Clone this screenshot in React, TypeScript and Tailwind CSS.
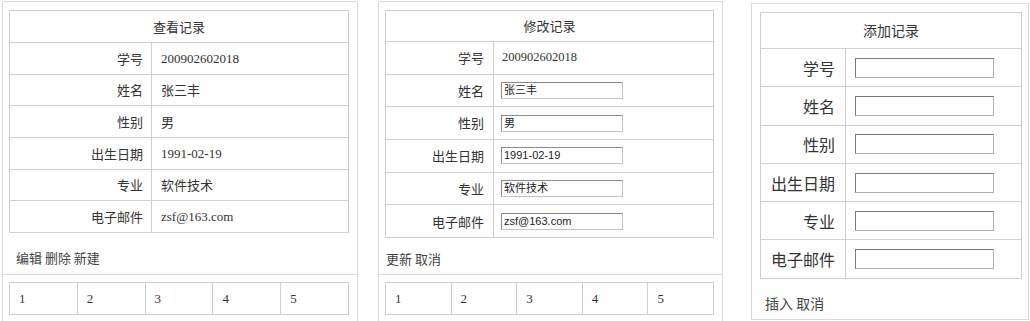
import React from "react";

const cjk = { fontFamily: '"Noto Sans CJK SC", "Liberation Sans", sans-serif' };
const serif = { fontFamily: '"Liberation Serif", "Noto Sans CJK SC", serif' };
const sans = { fontFamily: '"Liberation Sans", "Noto Sans CJK SC", sans-serif' };

const labels = ["学号", "姓名", "性别", "出生日期", "专业", "电子邮件"];

function Pager() {
  return (
    <table className="w-full table-fixed border border-[#cfcfcf] text-[13px] text-[#333]" style={serif}>
      <tbody>
        <tr className="h-[32px]">
          {["1", "2", "3", "4", "5"].map((n) => (
            <td key={n} className="border border-[#cfcfcf] pl-[9px] align-middle">
              {n}
            </td>
          ))}
        </tr>
      </tbody>
    </table>
  );
}

function ViewPanel() {
  const values = ["200902602018", "张三丰", "男", "1991-02-19", "软件技术", "zsf@163.com"];
  return (
    <div className="ml-[2px] mt-[1px] w-[356px] h-[340px] shrink-0 border border-[#d9d9d9] pt-[8px]">
      <table className="ml-[6px] w-[340px] table-fixed border border-[#cfcfcf] text-[13px] text-[#333]">
        <colgroup>
          <col className="w-[142px]" />
          <col />
        </colgroup>
        <tbody>
          <tr className="h-[32px]">
            <td colSpan={2} className="border border-[#cfcfcf] text-center" style={cjk}>
              查看记录
            </td>
          </tr>
          {labels.map((l, i) => (
            <tr key={l} className="h-[31.7px]">
              <td className="border border-[#cfcfcf] pr-[8px] text-right whitespace-nowrap" style={cjk}>
                {l}
              </td>
              <td
                className="border border-[#cfcfcf] pl-[9px]"
                style={i === 1 || i === 2 || i === 4 ? cjk : serif}
              >
                {values[i]}
              </td>
            </tr>
          ))}
        </tbody>
      </table>
      <div className="pl-[13px] pt-[17px] pb-[8px] text-[13px] leading-[16px] text-[#444]" style={cjk}>
        编辑 删除 新建
      </div>
      <div className="border-t border-[#d9d9d9] pt-[7px] pl-[6px] pr-[8px]">
        <Pager />
      </div>
    </div>
  );
}

function EditPanel() {
  const values = ["张三丰", "男", "1991-02-19", "软件技术", "zsf@163.com"];
  return (
    <div className="ml-[20px] mt-[1px] w-[345px] h-[340px] shrink-0 border border-[#d9d9d9] pt-[8px]">
      <table className="ml-[6px] w-[329px] table-fixed border border-[#cfcfcf] text-[13px] text-[#333]">
        <colgroup>
          <col className="w-[108px]" />
          <col />
        </colgroup>
        <tbody>
          <tr className="h-[31px]">
            <td colSpan={2} className="border border-[#cfcfcf] text-center" style={cjk}>
              修改记录
            </td>
          </tr>
          <tr className="h-[32.7px]">
            <td className="border border-[#cfcfcf] pr-[9px] text-right whitespace-nowrap" style={cjk}>
              学号
            </td>
            <td className="border border-[#cfcfcf] pl-[8px] text-[12.5px]" style={serif}>
              200902602018
            </td>
          </tr>
          {labels.slice(1).map((l, i) => (
            <tr key={l} className="h-[32.7px]">
              <td className="border border-[#cfcfcf] pr-[9px] text-right whitespace-nowrap" style={cjk}>
                {l}
              </td>
              <td className="border border-[#cfcfcf] pl-[7px]">
                <div
                  className="flex h-[17px] w-[122px] items-center border border-t-[#8a8a8a] border-l-[#8a8a8a] border-r-[#c4c4c4] border-b-[#c4c4c4] bg-white pl-[2px] text-[11px] leading-[13px] text-[#222]"
                  style={sans}
                >
                  {values[i]}
                </div>
              </td>
            </tr>
          ))}
        </tbody>
      </table>
      <div className="pl-[7px] pt-[13px] pb-[7px] text-[13px] leading-[16px] text-[#444]" style={cjk}>
        更新 取消
      </div>
      <div className="border-t border-[#d9d9d9] pt-[7px] pl-[6px] pr-[8px]">
        <Pager />
      </div>
    </div>
  );
}

function AddPanel() {
  return (
    <div className="ml-[28px] mt-[3px] w-[278px] h-[317px] shrink-0 border border-[#d9d9d9] pt-[8px]">
      <table className="ml-[8px] w-[262px] table-fixed border border-[#cfcfcf] text-[16px] text-[#333]">
        <colgroup>
          <col className="w-[85px]" />
          <col />
        </colgroup>
        <tbody>
          <tr className="h-[36px]">
            <td colSpan={2} className="border border-[#cfcfcf] text-center text-[14px]" style={cjk}>
              添加记录
            </td>
          </tr>
          {labels.map((l) => (
            <tr key={l} className="h-[38.3px]">
              <td className="border border-[#cfcfcf] pr-[10px] text-right whitespace-nowrap" style={cjk}>
                {l}
              </td>
              <td className="border border-[#cfcfcf] pl-[9px]">
                <div className="h-[20px] w-[139px] border border-t-[#7a7a7a] border-l-[#7a7a7a] border-r-[#b0b0b0] border-b-[#b0b0b0] bg-white" />
              </td>
            </tr>
          ))}
        </tbody>
      </table>
      <div className="pl-[13px] pt-[15px] text-[14px] leading-[18px] text-[#444]" style={cjk}>
        插入 取消
      </div>
    </div>
  );
}

export default function App() {
  return (
    <div className="flex h-[321px] w-[1030px] items-start overflow-hidden bg-white">
      <ViewPanel />
      <EditPanel />
      <AddPanel />
    </div>
  );
}
